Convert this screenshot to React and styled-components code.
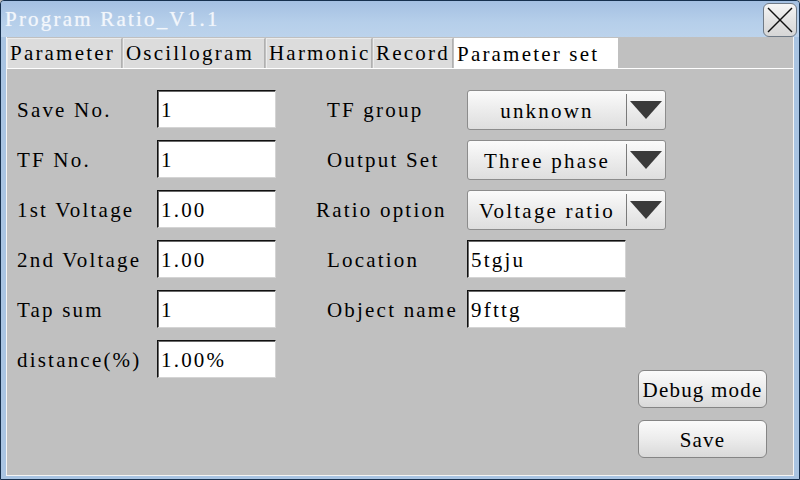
import React from "react";
import styled, { createGlobalStyle } from "styled-components";

const GlobalStyle = createGlobalStyle`
  html, body {
    margin: 0;
    padding: 0;
    background: #c0c0c0;
  }
  * {
    box-sizing: border-box;
  }
`;

const FONT = `"Liberation Serif", "Noto Sans CJK SC", serif`;

const Window = styled.div`
  width: 800px;
  height: 480px;
  border: 1px solid #16304e;
  border-radius: 4px 4px 0 0;
  background: #a9c4e2;
  display: flex;
  flex-direction: column;
  font-family: ${FONT};
  font-size: 21px;
  letter-spacing: 2.2px;
  color: #000;
  overflow: hidden;
`;

const TitleBar = styled.div`
  height: 36px;
  flex-shrink: 0;
  display: flex;
  align-items: center;
  justify-content: space-between;
  padding: 0 2px 0 4px;
  background: linear-gradient(#a4c0e2, #b6cfea 60%, #bcd3ec);
`;

const Title = styled.span`
  color: #f2f6fb;
  letter-spacing: 2.2px;
  text-shadow: 0 0 1px rgba(255, 255, 255, 0.6);
`;

const CloseButton = styled.div`
  width: 34px;
  height: 34px;
  margin-top: 1px;
  border: 1px solid #6f7a86;
  border-radius: 6px;
  background: linear-gradient(#f6f6f6, #e2e2e2 55%, #d6d6d6);
  display: flex;
  align-items: center;
  justify-content: center;
`;

const Client = styled.div`
  flex: 1;
  margin: 0 5px 3px 5px;
  background: #c0c0c0;
  border: 1px solid #f4f4f4;
  border-top: none;
  display: flex;
  flex-direction: column;
`;

const TabBar = styled.div`
  height: 32px;
  flex-shrink: 0;
  display: flex;
  align-items: flex-end;
  gap: 1px;
  padding-top: 1px;
  border-bottom: 1px solid #ffffff;
`;

const Tab = styled.div`
  width: ${(p) => p.$width}px;
  padding: 0 2px;
  display: flex;
  align-items: center;
  white-space: nowrap;
  background: ${(p) => (p.$active ? "#ffffff" : "#dcdcdc")};
  border: 1px solid ${(p) => (p.$active ? "#ffffff" : "#b0b0b0")};
  border-top-color: ${(p) => (p.$active ? "#ffffff" : "#ececec")};
  border-left-color: ${(p) => (p.$active ? "#ffffff" : "#ececec")};
  border-bottom: none;
  margin-bottom: ${(p) => (p.$active ? "-1px" : "0")};
  height: ${(p) => (p.$active ? "31px" : "30px")};
`;

const Form = styled.div`
  flex: 1;
  display: flex;
  padding: 21px 26px 0 10px;
`;

const LeftColumn = styled.div`
  display: flex;
  flex-direction: column;
`;

const RightColumn = styled.div`
  flex: 1;
  margin-left: 40px;
  display: flex;
  flex-direction: column;
`;

const Row = styled.div`
  height: 50px;
  display: flex;
  align-items: flex-start;
`;

const Label = styled.div`
  width: ${(p) => p.$width}px;
  padding-left: ${(p) => p.$indent || 0}px;
  height: 38px;
  line-height: 40px;
  white-space: nowrap;
`;

const TextBox = styled.div`
  width: ${(p) => p.$width}px;
  height: 38px;
  background: #ffffff;
  border: 1px solid;
  border-color: #111 #d4d4d4 #d4d4d4 #111;
  box-shadow: inset 1px 1px 0 #6a6a6a;
  padding-left: 3px;
  line-height: 38px;
  white-space: nowrap;
  overflow: hidden;
`;

const Select = styled.div`
  width: 199px;
  height: 40px;
  display: flex;
  border: 1px solid #8c8c8c;
  border-radius: 3px;
  background: linear-gradient(#fbfbfb, #ececec 50%, #dedede);
`;

const SelectValue = styled.div`
  flex: 1;
  min-width: 0;
  padding: 0 1px;
  text-align: center;
  line-height: 40px;
  white-space: nowrap;
  overflow: hidden;
`;

const SelectArrow = styled.div`
  width: 39px;
  display: flex;
  align-items: center;
  justify-content: center;
  position: relative;
  &::before {
    content: "";
    position: absolute;
    left: 0;
    top: 3px;
    bottom: 3px;
    border-left: 1px solid #7a7a7a;
  }
`;

const ButtonStack = styled.div`
  margin-top: 30px;
  align-self: flex-end;
  display: flex;
  flex-direction: column;
  gap: 12px;
`;

const Button = styled.div`
  width: 129px;
  height: 38px;
  border: 1px solid #858585;
  border-radius: 6px;
  background: linear-gradient(#fbfbfb, #ececec 50%, #d9d9d9);
  text-align: center;
  line-height: 38px;
  white-space: nowrap;
  letter-spacing: 1.2px;
`;

const tabs = [
  ["Parameter", 115],
  ["Oscillogram", 142],
  ["Harmonic", 106],
  ["Record", 80],
  ["Parameter set", 164],
];

const leftFields = [
  ["Save No.", "1"],
  ["TF No.", "1"],
  ["1st Voltage", "1.00"],
  ["2nd Voltage", "1.00"],
  ["Tap sum", "1"],
  ["distance(%)", "1.00%"],
];

function Arrow() {
  return (
    <svg width="32" height="18" viewBox="0 0 32 18">
      <polygon points="0,0 32,0 16,18" fill="#3a3a3a" />
    </svg>
  );
}

function CloseIcon() {
  return (
    <svg width="26" height="26" viewBox="0 0 26 26">
      <line x1="1" y1="1" x2="25" y2="25" stroke="#111" strokeWidth="1.4" />
      <line x1="25" y1="1" x2="1" y2="25" stroke="#111" strokeWidth="1.4" />
    </svg>
  );
}

export default function App() {
  return (
    <>
      <GlobalStyle />
      <Window>
        <TitleBar>
          <Title>Program Ratio_V1.1</Title>
          <CloseButton>
            <CloseIcon />
          </CloseButton>
        </TitleBar>
        <Client>
          <TabBar>
            {tabs.map(([t, w], i) => (
              <Tab key={t} $width={w} $active={i === tabs.length - 1}>
                {t}
              </Tab>
            ))}
          </TabBar>
          <Form>
            <LeftColumn>
              {leftFields.map(([label, value]) => (
                <Row key={label}>
                  <Label $width={140}>{label}</Label>
                  <TextBox $width={119}>{value}</TextBox>
                </Row>
              ))}
            </LeftColumn>
            <RightColumn>
              <Row>
                <Label $width={151} $indent={11}>TF group</Label>
                <Select>
                  <SelectValue>unknown</SelectValue>
                  <SelectArrow>
                    <Arrow />
                  </SelectArrow>
                </Select>
              </Row>
              <Row>
                <Label $width={151} $indent={11}>Output Set</Label>
                <Select>
                  <SelectValue>Three phase</SelectValue>
                  <SelectArrow>
                    <Arrow />
                  </SelectArrow>
                </Select>
              </Row>
              <Row>
                <Label $width={151}>Ratio option</Label>
                <Select>
                  <SelectValue>Voltage ratio</SelectValue>
                  <SelectArrow>
                    <Arrow />
                  </SelectArrow>
                </Select>
              </Row>
              <Row>
                <Label $width={151} $indent={11}>Location</Label>
                <TextBox $width={159}>5tgju</TextBox>
              </Row>
              <Row>
                <Label $width={151} $indent={11}>Object name</Label>
                <TextBox $width={159}>9fttg</TextBox>
              </Row>
              <ButtonStack>
                <Button>Debug mode</Button>
                <Button>Save</Button>
              </ButtonStack>
            </RightColumn>
          </Form>
        </Client>
      </Window>
    </>
  );
}
